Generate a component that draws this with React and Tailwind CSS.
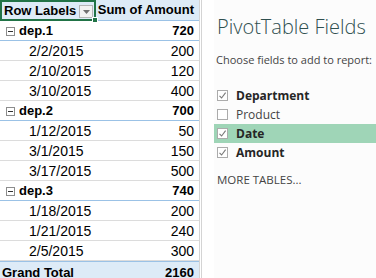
import React from "react";

const groups = [
  { name: "dep.1", total: 720, items: [["2/2/2015", 200], ["2/10/2015", 120], ["3/10/2015", 400]] },
  { name: "dep.2", total: 700, items: [["1/12/2015", 50], ["3/1/2015", 150], ["3/17/2015", 500]] },
  { name: "dep.3", total: 740, items: [["1/18/2015", 200], ["1/21/2015", 240], ["2/5/2015", 300]] },
];

function Minus() {
  return (
    <span className="w-[9px] h-[9px] border border-[#8c8c8c] bg-white flex items-center justify-center mr-[4px]">
      <span className="w-[5px] h-[1px] bg-[#333]" />
    </span>
  );
}

function Check({ checked }) {
  return (
    <span className="w-[11px] h-[11px] border border-[#ababab] bg-white flex items-center justify-center mr-[8px] shrink-0">
      {checked && (
        <svg width="9" height="9" viewBox="0 0 9 9">
          <path d="M1.5 4.8 L3.6 7 L7.6 1.6" fill="none" stroke="#7a7a7a" strokeWidth="1.1" />
        </svg>
      )}
    </span>
  );
}

export default function App() {
  const fields = [
    ["Department", true, false],
    ["Product", false, false],
    ["Date", true, true],
    ["Amount", true, false],
  ];
  return (
    <div className="w-[376px] h-[278px] overflow-hidden flex bg-white" style={{ fontFamily: '"Liberation Sans", Arial, sans-serif' }}>
      {/* sheet */}
      <div className="w-[200px] shrink-0 flex flex-col border-r border-[#d4d4d4] text-[#000]">
        <div className="h-[21px] flex bg-[#ddebf7] border-b border-[#9bc2e6] shrink-0">
          <div className="relative w-[96px] h-[21px] border-2 border-[#217346] flex items-center pl-[2px] text-[13px] font-bold">
            <span>Row Labels</span>
            <span className="absolute right-[1px] top-[3px] w-[14px] h-[13px] bg-[#f2f2f2] border border-[#b5b5b5] flex items-center justify-center">
              <svg width="7" height="4" viewBox="0 0 7 4"><path d="M0 0 L7 0 L3.5 4 Z" fill="#707070" /></svg>
            </span>
            <span className="absolute right-[-4px] bottom-[-4px] w-[6px] h-[6px] bg-[#217346] border border-white" />
          </div>
          <div className="flex-1 flex items-center justify-end pr-[5px] text-[13px] font-bold">Sum of Amount</div>
        </div>
        {groups.map((g) => (
          <React.Fragment key={g.name}>
            <div className="h-[20px] shrink-0 flex items-center border-b border-[#9bc2e6] text-[13px] font-bold pt-[1px]">
              <div className="w-[96px] flex items-center pl-[6px]">
                <Minus />
                <span>{g.name}</span>
              </div>
              <div className="flex-1 text-right pr-[5px]">{g.total}</div>
            </div>
            {g.items.map(([d, v]) => (
              <div key={d} className="h-[20px] shrink-0 flex items-center text-[14px] pt-[1px] border-b border-[#dcdcdc]">
                <div className="w-[96px] pl-[29px]">{d}</div>
                <div className="flex-1 text-right pr-[5px]">{v}</div>
              </div>
            ))}
          </React.Fragment>
        ))}
        <div className="h-[20px] shrink-0 flex items-center bg-[#ddebf7] border-t border-[#9bc2e6] text-[13px] font-bold pt-[2px]">
          <div className="w-[96px] pl-[2px]">Grand Total</div>
          <div className="flex-1 text-right pr-[5px]">2160</div>
        </div>
      </div>
      {/* pane */}
      <div className="flex-1 flex border-l border-[#d4d4d4] ml-[1px]">
        <div className="w-[12px] bg-white shrink-0" />
        <div className="flex-1 bg-[#fcfcfc] flex flex-col" style={{ fontFamily: '"Open Sans", "Noto Sans", sans-serif' }}>
          <div className="pl-[3px] pt-[14px] h-[52px] text-[20px] font-light text-[#2f4f4f] leading-[26px] whitespace-nowrap">PivotTable Fields</div>
          <div className="pl-[2px] text-[11px] text-[#444] leading-[16px] whitespace-nowrap">Choose fields to add to report:</div>
          <div className="mt-[18px] flex flex-col">
            {fields.map(([n, c, hl]) => (
              <div key={n} className={`h-[19px] flex items-center pl-[3px] text-[12px] ${hl ? "bg-[#9fd5b7]" : ""} ${c ? "font-bold text-[#262626]" : "text-[#444]"}`}>
                <Check checked={c} />
                <span>{n}</span>
              </div>
            ))}
          </div>
          <div className="pl-[3px] mt-[9px] text-[11.5px] text-[#444] whitespace-nowrap">MORE TABLES...</div>
        </div>
      </div>
    </div>
  );
}
